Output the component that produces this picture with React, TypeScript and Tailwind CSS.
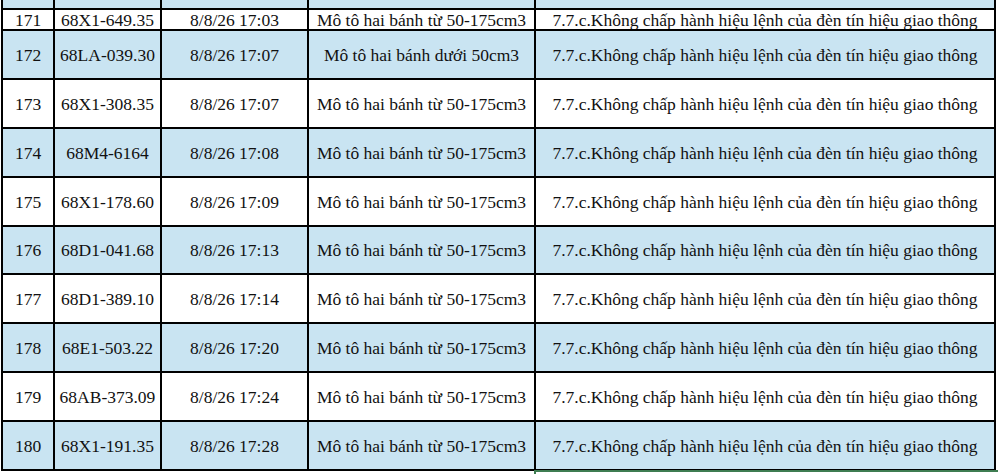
import React from "react";

type Row = { n: string; plate: string; time: string; type: string; v: string };

const V = "7.7.c.Không chấp hành hiệu lệnh của đèn tín hiệu giao thông";
const T = "Mô tô hai bánh từ 50-175cm3";

const rows: Row[] = [
  { n: "171", plate: "68X1-649.35", time: "8/8/26 17:03", type: T, v: V },
  { n: "172", plate: "68LA-039.30", time: "8/8/26 17:07", type: "Mô tô hai bánh dưới 50cm3", v: V },
  { n: "173", plate: "68X1-308.35", time: "8/8/26 17:07", type: T, v: V },
  { n: "174", plate: "68M4-6164", time: "8/8/26 17:08", type: T, v: V },
  { n: "175", plate: "68X1-178.60", time: "8/8/26 17:09", type: T, v: V },
  { n: "176", plate: "68D1-041.68", time: "8/8/26 17:13", type: T, v: V },
  { n: "177", plate: "68D1-389.10", time: "8/8/26 17:14", type: T, v: V },
  { n: "178", plate: "68E1-503.22", time: "8/8/26 17:20", type: T, v: V },
  { n: "179", plate: "68AB-373.09", time: "8/8/26 17:24", type: T, v: V },
  { n: "180", plate: "68X1-191.35", time: "8/8/26 17:28", type: T, v: V },
];

const heights = ["h-[21px]", "h-[49px]", "h-[49px]", "h-[49px]", "h-[49px]", "h-[48px]", "h-[49px]", "h-[49px]", "h-[49px]", "h-[49px]"];

function Cell({ w, children }: { w: string; children?: React.ReactNode }) {
  return (
    <div className={`${w} shrink-0 h-full border-r-2 border-black flex items-center justify-center pt-[2px] whitespace-nowrap overflow-hidden`}>
      {children}
    </div>
  );
}

export default function App() {
  return (
    <div
      className="relative w-[998px] h-[474px] bg-white overflow-hidden text-[17.5px] leading-none text-[#111111]"
      style={{ fontFamily: '"Liberation Serif", "Times New Roman", serif' }}
    >
      <div className="ml-[1px] w-[995px] border-l-2 border-black">
        <div className="flex h-[10px] border-b-2 border-black bg-[#c9e4f2]">
          <Cell w="w-[52px]" />
          <Cell w="w-[107px]" />
          <Cell w="w-[147px]" />
          <Cell w="w-[227px]" />
          <Cell w="w-[460px]" />
        </div>
        {rows.map((r, i) => (
          <div
            key={r.n}
            className={`flex ${heights[i]} border-b-2 border-black ${i % 2 === 1 ? "bg-[#c9e4f2]" : "bg-white"}`}
          >
            <Cell w="w-[52px]">{r.n}</Cell>
            <Cell w="w-[107px]">{r.plate}</Cell>
            <Cell w="w-[147px]">{r.time}</Cell>
            <Cell w="w-[227px]">{r.type}</Cell>
            <Cell w="w-[460px]">{r.v}</Cell>
          </div>
        ))}
      </div>
      <div className="absolute left-[534px] top-[470px] w-[470px] h-[20px] border-2 border-[#3f7d52]" />
    </div>
  );
}
